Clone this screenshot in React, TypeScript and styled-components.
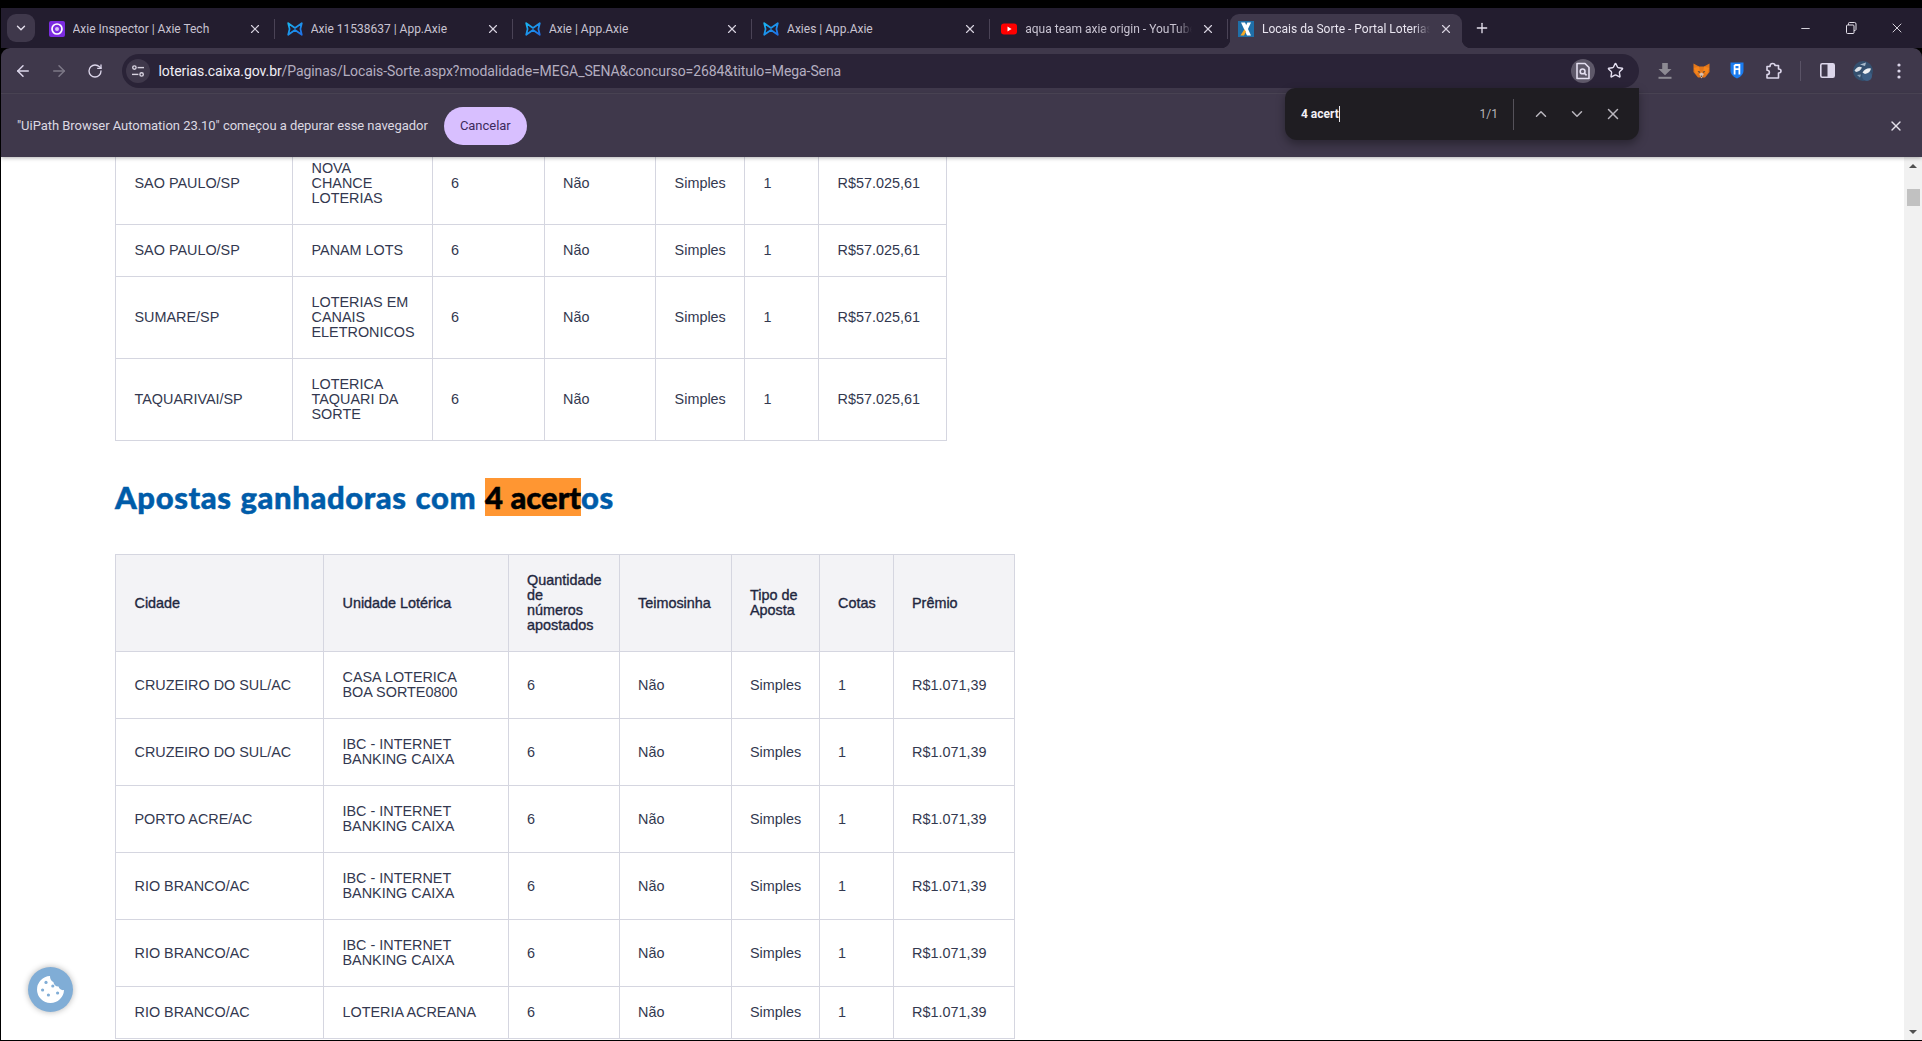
import { Fragment, ReactNode } from "react";
import styled, { createGlobalStyle, css } from "styled-components";
import {
  ArrowLeft,
  ArrowRight,
  ChevronDown,
  ChevronUp,
  Minus,
  Plus,
  RotateCw,
  Star,
  X,
} from "lucide-react";

const GlobalStyle = createGlobalStyle`
  html, body {
    margin: 0;
    padding: 0;
    background: #000;
    overflow: hidden;
  }
  * { box-sizing: border-box; }
`;

const chromeFont = `Roboto, "Noto Sans", sans-serif`;
const pageFont = `"Liberation Sans", Arial, sans-serif`;

const AxieIcon = () => (
  <svg width="16" height="16" viewBox="0 0 16 16" fill="none">
    <defs>
      <linearGradient id="axieBlue" x1="0" y1="0" x2="1" y2="1">
        <stop offset="0" stopColor="#19b5f1" />
        <stop offset="1" stopColor="#1f6fe8" />
      </linearGradient>
    </defs>
    <path
      d="M1.2 2.2 L8 7 L14.8 2.2 L13.4 8 L14.8 13.8 L8 9 L1.2 13.8 L2.6 8 Z"
      stroke="url(#axieBlue)"
      strokeWidth="1.7"
      strokeLinejoin="round"
    />
  </svg>
);

const InspectorIcon = () => (
  <svg width="16" height="16" viewBox="0 0 16 16">
    <rect width="16" height="16" rx="2" fill="#7b2be0" />
    <circle cx="8" cy="8" r="5" fill="none" stroke="#fff" strokeWidth="1.7" />
    <circle cx="8" cy="8" r="2" fill="#d9c2f7" />
  </svg>
);

const YoutubeIcon = () => (
  <svg width="16" height="16" viewBox="0 0 16 16">
    <rect y="2.5" width="16" height="11" rx="3" fill="#f00" />
    <path d="M6.5 5.6 L10.6 8 L6.5 10.4 Z" fill="#fff" />
  </svg>
);

const CaixaIcon = () => (
  <svg width="16" height="16" viewBox="0 0 16 16">
    <rect width="16" height="16" fill="#1f6fa8" />
    <path d="M3 1.5 H7 L13 14.5 H9 Z" fill="#fff" />
    <path d="M13 1.5 H9.4 L7 6.6 L8.8 10.4 Z" fill="#fff" />
    <path d="M6.4 8.2 L2.4 14.5 H6 L8 10.8 Z" fill="#f7a823" />
  </svg>
);

const TuneIcon = () => (
  <svg width="14" height="14" viewBox="0 0 14 14" fill="none" stroke="#d8d3e0" strokeWidth="1.4">
    <circle cx="3.4" cy="3.6" r="1.7" />
    <path d="M6.6 3.6 H13" />
    <circle cx="10.6" cy="10.4" r="1.7" />
    <path d="M1 10.4 H7.4" />
  </svg>
);

const FindPageIcon = () => (
  <svg width="16" height="18" viewBox="0 0 16 18" fill="none" stroke="#e4dff0" strokeWidth="1.6">
    <path d="M2 1.5 H10 L14 5.5 V16.5 H2 Z" strokeLinejoin="round" />
    <circle cx="7.6" cy="9.4" r="2.4" />
    <path d="M9.4 11.2 L11.6 13.4" />
  </svg>
);

const DownloadIcon = () => (
  <svg width="16" height="18" viewBox="0 0 16 18" fill="#8d8a93">
    <path d="M5.2 1 H10.8 V7 H14.5 L8 13.2 L1.5 7 H5.2 Z" />
    <rect x="1.5" y="14.8" width="13" height="2" />
  </svg>
);

const FoxIcon = () => (
  <svg width="17" height="16" viewBox="0 0 17 16">
    <path d="M0.5 0.5 L6 3.5 H11 L16.5 0.5 L16.5 9 L12 14.5 H5 L0.5 9 Z" fill="#e2761b" />
    <path d="M0.8 5 L6 3.5 L7 9 L3 11 Z" fill="#f6851b" />
    <path d="M16.2 5 L11 3.5 L10 9 L14 11 Z" fill="#f6851b" />
    <path d="M6.2 11 L8.5 15.6 L10.8 11 L8.5 9.4 Z" fill="#d7c1b3" />
    <path d="M4.6 8.2 L7 8.4 L6.4 10 Z" fill="#233447" />
    <path d="M12.4 8.2 L10 8.4 L10.6 10 Z" fill="#233447" />
    <path d="M7.6 12.8 H9.4 L8.5 14 Z" fill="#161616" />
  </svg>
);

const BitwardenIcon = () => (
  <svg width="14" height="17" viewBox="0 0 14 17">
    <path d="M0.5 0.5 H13.5 V9 Q13.5 13.4 7 16.6 Q0.5 13.4 0.5 9 Z" fill="#1a7cf0" />
    <path
      d="M4.6 3 H9.4 V12.4 M4.6 3 V12.4 M4.6 7.2 H9.4"
      fill="none"
      stroke="#fff"
      strokeWidth="1.8"
    />
  </svg>
);

const PuzzleIcon = () => (
  <svg width="18" height="18" viewBox="0 0 18 18" fill="none" stroke="#dcd6ea" strokeWidth="1.6" strokeLinejoin="round">
    <path d="M3 4.5 H6 Q6 1.5 8.5 1.5 Q11 1.5 11 3.5 H14.5 V7 Q17 7 17 9 Q17 11 14.5 11 V16 H3 V12.5 Q5.4 12.5 5.4 10.4 Q5.4 8.2 3 8.2 Z" />
  </svg>
);

const SidePanelIcon = () => (
  <svg width="15" height="15" viewBox="0 0 15 15">
    <rect x="0.8" y="0.8" width="13.4" height="13.4" rx="1.4" fill="none" stroke="#dcd6ea" strokeWidth="1.6" />
    <rect x="7.5" y="1" width="6.5" height="13" fill="#dcd6ea" />
  </svg>
);

const AvatarIcon = () => (
  <svg width="20" height="20" viewBox="0 0 20 20">
    <circle cx="10" cy="10" r="10" fill="#34506f" />
    <circle cx="14" cy="15" r="5" fill="#3d5f85" />
    <path d="M1.5 9.5 Q5 4 9 6.5 Q7 10.5 3 11 Z" fill="#dfe4ea" />
    <path d="M9.5 11.5 Q13 6.5 18 7.5 Q17 12 12 13 Z" fill="#eef1f4" />
    <path d="M7 3.5 L13 1.5 L12 5 Z" fill="#a9bacb" />
    <path d="M4 14 L8 13.5 L7 16.5 Z" fill="#8ba2b8" />
  </svg>
);

const DotsIcon = () => (
  <svg width="4" height="16" viewBox="0 0 4 16" fill="#dcd6ea">
    <circle cx="2" cy="2" r="1.6" />
    <circle cx="2" cy="8" r="1.6" />
    <circle cx="2" cy="14" r="1.6" />
  </svg>
);

const RestoreIcon = () => (
  <svg width="12" height="12" viewBox="0 0 12 12" fill="none" stroke="#e4e0ea" strokeWidth="1">
    <rect x="1.5" y="3" width="7.5" height="8.5" rx="1" />
    <path d="M3.5 3 V1.5 Q3.5 0.5 4.5 0.5 H9.5 Q11 0.5 11 2 V7.5 Q11 8.5 9 8.5" />
  </svg>
);

const CookieIcon = () => (
  <svg width="29" height="29" viewBox="0 0 29 29">
    <path
      d="M14 1 A13.5 13.5 0 1 0 28 15 C25.5 15.6 23 14 22.6 11.6 C20 11.8 17.6 9.8 17.4 7 C15.4 6.4 13.8 3.8 14 1 Z"
      fill="#fff"
    />
    <g fill="#80add6">
      <circle cx="10" cy="7.4" r="1.6" />
      <circle cx="16.8" cy="11" r="1.6" />
      <circle cx="6.6" cy="15" r="1.6" />
      <circle cx="12.4" cy="20" r="1.6" />
      <circle cx="21.6" cy="18" r="1.6" />
    </g>
  </svg>
);

const Window = styled.div`
  width: 1922px;
  height: 1041px;
  position: relative;
  display: flex;
  flex-direction: column;
  padding-top: 8px;
  background: #000;
  border-left: 1px solid #000;
  border-bottom: 1px solid #000;
  overflow: hidden;
`;

const TabStrip = styled.div`
  height: 40px;
  flex: none;
  display: flex;
  align-items: center;
  background: #231d2f;
  font-family: ${chromeFont};
`;

const TabSearch = styled.div`
  width: 28px;
  height: 28px;
  margin: 0 2px 0 6px;
  border-radius: 9px;
  background: #3f384b;
  color: #e6e1ee;
  display: flex;
  align-items: center;
  justify-content: center;
`;

const Tab = styled.div<{ $active?: boolean }>`
  position: relative;
  align-self: flex-end;
  width: 237.2px;
  height: 34px;
  padding: 0 11px 4px 11.5px;
  display: flex;
  align-items: center;
  gap: 8px;
  flex: none;
  color: #c8c3d1;
  ${(p) =>
    p.$active &&
    css`
      width: 232px;
      margin-left: 2px;
      padding: 0 8px 4px 8px;
      gap: 8px;
      background: #3f384b;
      border-radius: 9px 9px 0 0;
      color: #e8e4ef;
      &::before,
      &::after {
        content: "";
        position: absolute;
        bottom: 0;
        width: 9px;
        height: 9px;
      }
      &::before {
        left: -9px;
        background: radial-gradient(circle at 0 0, transparent 9px, #3f384b 9.5px);
      }
      &::after {
        right: -9px;
        background: radial-gradient(circle at 100% 0, transparent 9px, #3f384b 9.5px);
      }
    `}
`;

const TabTitle = styled.span<{ $fade?: boolean }>`
  flex: 1;
  min-width: 0;
  font-size: 12px;
  line-height: 16px;
  white-space: nowrap;
  overflow: hidden;
  ${(p) =>
    p.$fade &&
    css`
      mask-image: linear-gradient(to right, #000 calc(100% - 16px), transparent);
    `}
`;

const TabClose = styled.span`
  width: 16px;
  height: 16px;
  flex: none;
  display: flex;
  align-items: center;
  justify-content: center;
  color: #d6d1de;
`;

const TabSep = styled.span`
  width: 1px;
  height: 20px;
  flex: none;
  margin-bottom: -2px;
  background: #4a4356;
`;

const NewTab = styled.div`
  width: 28px;
  height: 28px;
  margin-left: 6px;
  flex: none;
  display: flex;
  align-items: center;
  justify-content: center;
  color: #e6e1ee;
`;

const WindowControls = styled.div`
  margin-left: auto;
  margin-right: 2px;
  display: flex;
`;

const WindowButton = styled.div`
  width: 46px;
  height: 28px;
  display: flex;
  align-items: center;
  justify-content: center;
  color: #f0edf4;
`;

const Toolbar = styled.div`
  height: 46px;
  flex: none;
  display: flex;
  align-items: center;
  padding: 0 5px 0 4px;
  background: #3f384b;
  border-radius: 9px 9px 0 0;
  border-bottom: 1px solid #4e4759;
  font-family: ${chromeFont};
`;

const ToolButton = styled.div<{ $muted?: boolean }>`
  width: 36px;
  height: 34px;
  flex: none;
  display: flex;
  align-items: center;
  justify-content: center;
  color: ${(p) => (p.$muted ? "#7d7887" : "#dcd6ea")};
`;

const Omnibox = styled.div`
  flex: 1;
  height: 34px;
  margin: 0 8px 0 9px;
  padding: 0 12px 0 4px;
  display: flex;
  align-items: center;
  border-radius: 17px;
  background: #2a2337;
`;

const SiteChip = styled.span`
  width: 24px;
  height: 24px;
  flex: none;
  border-radius: 50%;
  background: #3f384b;
  display: flex;
  align-items: center;
  justify-content: center;
`;

const UrlText = styled.span`
  margin-left: 8.5px;
  flex: 1;
  font-size: 14px;
  letter-spacing: -0.08px;
  color: #b4aec0;
  white-space: nowrap;
`;

const UrlHost = styled.span`
  color: #f0edf5;
`;

const OmniAction = styled.span<{ $lit?: boolean }>`
  width: 24px;
  height: 24px;
  margin-left: 8px;
  flex: none;
  border-radius: 50%;
  display: flex;
  align-items: center;
  justify-content: center;
  color: #e4dff0;
  background: ${(p) => (p.$lit ? "#5e5869" : "transparent")};
`;

const ToolDivider = styled.span`
  width: 1px;
  height: 20px;
  margin: 0 8px 0 9px;
  flex: none;
  background: #5a5366;
`;

const Infobar = styled.div`
  height: 63px;
  flex: none;
  padding: 0 18px 0 16px;
  display: flex;
  align-items: center;
  background: #3f384b;
  box-shadow: 0 1px 4px rgba(0, 0, 0, 0.3);
  position: relative;
  z-index: 1;
  font-family: ${chromeFont};
  color: #dcd8e2;
  font-size: 13px;
  letter-spacing: -0.04px;
`;

const CancelButton = styled.span`
  width: 83px;
  height: 38px;
  margin-left: 16px;
  border-radius: 19px;
  background: #d8bfff;
  color: #3d2a5c;
  display: flex;
  align-items: center;
  justify-content: center;
  font-size: 13px;
`;

const InfobarClose = styled.span`
  margin-left: auto;
  display: flex;
  color: #e4e0ea;
`;

const FindBar = styled.div`
  position: absolute;
  top: 88px;
  right: 283px;
  width: 354px;
  height: 52px;
  z-index: 2;
  padding: 0 8px 0 16px;
  display: flex;
  align-items: center;
  background: #1f1d22;
  border-radius: 10px 0 12px 12px;
  box-shadow: 0 4px 10px rgba(0, 0, 0, 0.35);
  font-family: ${chromeFont};
`;

const FindInput = styled.span`
  flex: 1;
  height: 18px;
  display: flex;
  align-items: center;
  font-size: 12px;
  font-weight: 700;
  color: #f2f0f5;
`;

const Caret = styled.span`
  width: 1px;
  height: 16px;
  background: #e8e6ea;
`;

const FindCount = styled.span`
  font-size: 12px;
  color: #b6b3ba;
  margin-right: 15px;
`;

const FindSep = styled.span`
  width: 1px;
  height: 31px;
  margin-right: 9px;
  background: #55525a;
`;

const FindAction = styled.span`
  width: 36px;
  display: flex;
  justify-content: center;
  color: #b9b6be;
`;

const Body = styled.div`
  flex: 1;
  min-height: 0;
  display: flex;
  background: #fff;
`;

const Page = styled.main`
  flex: 1;
  min-width: 0;
  overflow: hidden;
  padding-left: 114px;
  font-family: ${pageFont};
`;

const Table = styled.table<{ $w: number; $clip?: boolean }>`
  width: ${(p) => p.$w}px;
  table-layout: fixed;
  border-collapse: collapse;
  margin-top: ${(p) => (p.$clip ? "-15px" : "0")};
  font-size: 14.4px;
  line-height: 15px;
  color: #33384f;
`;

const Cell = styled.td`
  border: 1px solid #d5d6e0;
  padding: 18px 17.5px 18px 18.5px;
  white-space: pre-line;
  vertical-align: middle;
`;

const HeadCell = styled.th`
  border: 1px solid #d5d6e0;
  padding: 18px 17.5px 18px 18.5px;
  background: #f3f3f6;
  color: #1f2740;
  font-weight: 400;
  text-align: left;
  white-space: pre-line;
  -webkit-text-stroke: 0.35px #1f2740;
`;

const Heading = styled.h2`
  margin: 37px 0 38px;
  font-family: Lato, "Open Sans", sans-serif;
  font-weight: 900;
  font-size: 31px;
  letter-spacing: 0.6px;
  word-spacing: 1px;
  line-height: 38px;
  color: #005ca9;
  white-space: nowrap;
  -webkit-text-stroke: 0.5px currentColor;
`;

const Hit = styled.mark`
  display: inline-block;
  vertical-align: top;
  letter-spacing: 0;
  word-spacing: 0;
  background: #ff9632;
  color: #000;
`;

const Scrollbar = styled.div`
  width: 18px;
  flex: none;
  display: flex;
  flex-direction: column;
  align-items: center;
  background: #f1f1f1;
`;

const ScrollArrow = styled.span<{ $down?: boolean }>`
  width: 0;
  height: 0;
  margin: ${(p) => (p.$down ? "auto 0 6px" : "7px 0 0")};
  border-left: 4px solid transparent;
  border-right: 4px solid transparent;
  ${(p) =>
    p.$down ? "border-top: 4px solid #505050;" : "border-bottom: 4px solid #505050;"}
`;

const ScrollThumb = styled.span`
  width: 13px;
  height: 17px;
  margin-top: 21px;
  background: #c1c1c1;
`;

const CookieButton = styled.div`
  position: absolute;
  left: 27px;
  top: 967px;
  width: 45px;
  height: 45px;
  border-radius: 50%;
  background: #80add6;
  box-shadow: 0 0 6px rgba(0, 0, 0, 0.3);
  display: flex;
  align-items: center;
  justify-content: center;
  z-index: 1;
`;

type Row = [string, string, string, string, string, string, string];

const heads = [
  "Cidade",
  "Unidade Lotérica",
  "Quantidade\nde\nnúmeros\napostados",
  "Teimosinha",
  "Tipo de\nAposta",
  "Cotas",
  "Prêmio",
];

const prize6 = (city: string, unit: string): Row => [city, unit, "6", "Não", "Simples", "1", "R$57.025,61"];
const prize4 = (city: string, unit: string): Row => [city, unit, "6", "Não", "Simples", "1", "R$1.071,39"];

const sixRows: Row[] = [
  prize6("SAO PAULO/SP", "NOVA\nCHANCE\nLOTERIAS"),
  prize6("SAO PAULO/SP", "PANAM LOTS"),
  prize6("SUMARE/SP", "LOTERIAS EM\nCANAIS\nELETRONICOS"),
  prize6("TAQUARIVAI/SP", "LOTERICA\nTAQUARI DA\nSORTE"),
];

const fourRows: Row[] = [
  prize4("CRUZEIRO DO SUL/AC", "CASA LOTERICA\nBOA SORTE0800"),
  prize4("CRUZEIRO DO SUL/AC", "IBC - INTERNET\nBANKING CAIXA"),
  prize4("PORTO ACRE/AC", "IBC - INTERNET\nBANKING CAIXA"),
  prize4("RIO BRANCO/AC", "IBC - INTERNET\nBANKING CAIXA"),
  prize4("RIO BRANCO/AC", "IBC - INTERNET\nBANKING CAIXA"),
  prize4("RIO BRANCO/AC", "LOTERIA ACREANA"),
];

const tabs: { icon: ReactNode; title: string; fade?: boolean }[] = [
  { icon: <InspectorIcon />, title: "Axie Inspector | Axie Tech" },
  { icon: <AxieIcon />, title: "Axie 11538637 | App.Axie" },
  { icon: <AxieIcon />, title: "Axie | App.Axie" },
  { icon: <AxieIcon />, title: "Axies | App.Axie" },
  { icon: <YoutubeIcon />, title: "aqua team axie origin - YouTube", fade: true },
];

function DataTable({ widths, clip, head, rows }: { widths: number[]; clip?: boolean; head?: string[]; rows: Row[] }) {
  return (
    <Table $w={widths.reduce((a, b) => a + b, 0)} $clip={clip}>
      <colgroup>
        {widths.map((w, i) => (
          <col key={i} width={w} />
        ))}
      </colgroup>
      {head && (
        <thead>
          <tr>
            {head.map((h) => (
              <HeadCell key={h}>{h}</HeadCell>
            ))}
          </tr>
        </thead>
      )}
      <tbody>
        {rows.map((row, i) => (
          <tr key={i}>
            {row.map((value, j) => (
              <Cell key={j}>{value}</Cell>
            ))}
          </tr>
        ))}
      </tbody>
    </Table>
  );
}

export default function App() {
  return (
    <Window>
      <GlobalStyle />
      <TabStrip>
        <TabSearch>
          <ChevronDown size={14} strokeWidth={2.4} />
        </TabSearch>
        {tabs.map((t) => (
          <Fragment key={t.title}>
            <Tab>
              {t.icon}
              <TabTitle $fade={t.fade}>{t.title}</TabTitle>
              <TabClose>
                <X size={14} />
              </TabClose>
            </Tab>
            <TabSep />
          </Fragment>
        ))}
        <Tab $active>
          <CaixaIcon />
          <TabTitle $fade>Locais da Sorte - Portal Loterias</TabTitle>
          <TabClose>
            <X size={14} />
          </TabClose>
        </Tab>
        <NewTab>
          <Plus size={16} />
        </NewTab>
        <WindowControls>
          <WindowButton>
            <Minus size={13} strokeWidth={1.6} />
          </WindowButton>
          <WindowButton>
            <RestoreIcon />
          </WindowButton>
          <WindowButton>
            <X size={16} strokeWidth={1.3} />
          </WindowButton>
        </WindowControls>
      </TabStrip>

      <Toolbar>
        <ToolButton>
          <ArrowLeft size={18} />
        </ToolButton>
        <ToolButton $muted>
          <ArrowRight size={18} />
        </ToolButton>
        <ToolButton>
          <RotateCw size={16} />
        </ToolButton>
        <Omnibox>
          <SiteChip>
            <TuneIcon />
          </SiteChip>
          <UrlText>
            <UrlHost>loterias.caixa.gov.br</UrlHost>
            /Paginas/Locais-Sorte.aspx?modalidade=MEGA_SENA&amp;concurso=2684&amp;titulo=Mega-Sena
          </UrlText>
          <OmniAction $lit>
            <FindPageIcon />
          </OmniAction>
          <OmniAction>
            <Star size={17} />
          </OmniAction>
        </Omnibox>
        <ToolButton>
          <DownloadIcon />
        </ToolButton>
        <ToolButton>
          <FoxIcon />
        </ToolButton>
        <ToolButton>
          <BitwardenIcon />
        </ToolButton>
        <ToolButton>
          <PuzzleIcon />
        </ToolButton>
        <ToolDivider />
        <ToolButton>
          <SidePanelIcon />
        </ToolButton>
        <ToolButton>
          <AvatarIcon />
        </ToolButton>
        <ToolButton>
          <DotsIcon />
        </ToolButton>
      </Toolbar>

      <Infobar>
        "UiPath Browser Automation 23.10" começou a depurar esse navegador
        <CancelButton>Cancelar</CancelButton>
        <InfobarClose>
          <X size={16} />
        </InfobarClose>
      </Infobar>

      <FindBar>
        <FindInput>
          4 acert
          <Caret />
        </FindInput>
        <FindCount>1/1</FindCount>
        <FindSep />
        <FindAction>
          <ChevronUp size={18} />
        </FindAction>
        <FindAction>
          <ChevronDown size={18} />
        </FindAction>
        <FindAction>
          <X size={18} />
        </FindAction>
      </FindBar>

      <Body>
        <Page>
          <DataTable clip widths={[177, 139.5, 112, 111.6, 88.9, 74, 128.3]} rows={sixRows} />
          <Heading>
            Apostas ganhadoras com <Hit>4 acert</Hit>os
          </Heading>
          <DataTable widths={[208, 184.5, 111, 112, 88, 74, 121]} head={heads} rows={fourRows} />
        </Page>
        <Scrollbar>
          <ScrollArrow />
          <ScrollThumb />
          <ScrollArrow $down />
        </Scrollbar>
      </Body>

      <CookieButton>
        <CookieIcon />
      </CookieButton>
    </Window>
  );
}
